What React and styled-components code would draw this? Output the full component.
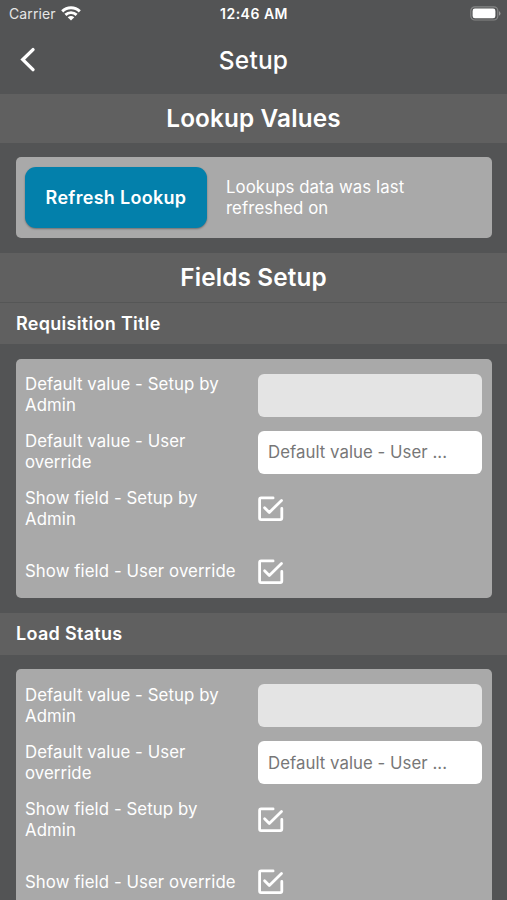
import React from "react";
import styled, { createGlobalStyle } from "styled-components";

const GlobalStyle = createGlobalStyle`
  * { box-sizing: border-box; }
  html, body { margin: 0; height: 100%; overflow: hidden; }
  body { background: #535455; color: #fff; font-family: Inter, "Liberation Sans", sans-serif; }
`;

const Screen = styled.main`
  display: flex;
  flex-direction: column;
  height: 900px;
  overflow: hidden;
  background: #535455;
`;

const StatusBar = styled.div`
  display: grid;
  grid-template-columns: 1fr auto 1fr;
  align-items: center;
  flex: none;
  height: 27px;
  padding: 0 6px 0 9px;
  font-size: 14px;
  line-height: 17px;
`;

const Carrier = styled.div`
  display: flex;
  align-items: center;
  gap: 5px;
  color: #e6e6e6;
  letter-spacing: 0.12px;
`;

const Clock = styled.div`
  margin-left: -2px;
  font-weight: 600;
  letter-spacing: 0.5px;
`;

const BatteryIcon = styled.svg`
  justify-self: end;
`;

const NavBar = styled.header`
  display: grid;
  grid-template-columns: 56px 1fr 56px;
  align-items: center;
  flex: none;
  height: 67px;
  padding-bottom: 2px;
`;

const BackButton = styled.button`
  display: flex;
  justify-content: center;
  padding: 0;
  border: 0;
  background: none;
`;

const PageTitle = styled.h1`
  margin: 0;
  text-align: center;
  font-size: 24.5px;
  font-weight: 500;
  letter-spacing: 0.2px;
`;

const SectionTitle = styled.h2`
  display: flex;
  align-items: center;
  justify-content: center;
  flex: none;
  height: 49px;
  margin: 0;
  padding-bottom: 1.5px;
  background: #606060;
  font-size: 24.3px;
  font-weight: 600;
  letter-spacing: 0.15px;
`;

const FieldTitle = styled.h3`
  display: flex;
  align-items: center;
  flex: none;
  height: 42px;
  margin: 0;
  padding-left: 16px;
  background: #606060;
  font-size: 18px;
  font-weight: 600;
  letter-spacing: 0.3px;
  box-shadow: ${(p) => (p.$divided ? "inset 0 1px #555656" : "none")};
`;

const Card = styled.section`
  flex: none;
  margin: 14px 15px 15px 15.5px;
  border-radius: 5px;
  background: #a9a9a9;
`;

const RefreshCard = styled(Card)`
  display: flex;
  align-items: center;
  gap: 19px;
  height: 81px;
  padding: 0 10px 0 9.5px;
`;

const RefreshButton = styled.button`
  flex: none;
  width: 182px;
  height: 61px;
  padding: 0;
  border: 0;
  border-radius: 11px;
  background: #0380ab;
  color: #fff;
  box-shadow: 0 1px 2px #00000059;
  font: 600 18px Inter, sans-serif;
  letter-spacing: 0.3px;
`;

const Label = styled.div`
  font-size: 16.8px;
  line-height: 21px;
  letter-spacing: 0.08px;
`;

const RefreshNote = styled(Label)`
  width: 220px;
`;

const FieldCard = styled(Card)`
  display: grid;
  grid-template-columns: 219px 224px;
  grid-template-rows: 43px 43px 43px 43px;
  column-gap: 14px;
  row-gap: 14.2px;
  align-items: center;
  height: 239px;
  margin-top: 14.6px;
  margin-bottom: 15px;
  padding: 15px 9.5px 0;
`;

const ValueInput = styled.input`
  width: 224px;
  height: 43px;
  padding: 0 30px 0 10px;
  border: 0;
  border-radius: 6px;
  outline: 0;
  background: ${(p) => (p.disabled ? "#e4e4e4" : "#fff")};
  font: 16.8px Inter, sans-serif;
  letter-spacing: 0.04px;
  &::placeholder { color: #777; opacity: 1; }
`;

const LastLabel = styled(Label)`
  padding-top: 10px;
`;

const LastCheck = styled.div`
  padding-top: 10px;
`;

const CheckSvg = styled.svg`
  display: block;
`;

function CheckIcon() {
  return (
    <CheckSvg width="26" height="26" viewBox="0 0 26 26" fill="none" stroke="#fff" strokeWidth="2.8" strokeLinecap="round" strokeLinejoin="round">
      <path d="M15.1 1.9H3.1Q1.6 1.9 1.6 3.4V22.1Q1.6 23.6 3.1 23.6H22.3Q23.8 23.6 23.8 22.1V12.4" />
      <path d="M6.6 11.7L11.3 16.4L23.5 4.4" />
    </CheckSvg>
  );
}

function FieldSettings() {
  return (
    <FieldCard>
      <Label>Default value - Setup by Admin</Label>
      <ValueInput disabled aria-label="Default value - Setup by Admin" />
      <Label>Default value - User<br />override</Label>
      <ValueInput placeholder="Default value - User ..." />
      <Label>Show field - Setup by Admin</Label>
      <CheckIcon />
      <LastLabel>Show field - User override</LastLabel>
      <LastCheck><CheckIcon /></LastCheck>
    </FieldCard>
  );
}

export default function App() {
  return (
    <Screen>
      <GlobalStyle />
      <StatusBar>
        <Carrier>
          <span>Carrier</span>
          <svg width="20" height="16" viewBox="0 0 20 16" fill="none" stroke="#fff" strokeWidth="2.9">
            <path d="M1.2 5.4C6.2 .6 13.8 .6 18.8 5.4" />
            <path d="M4.4 8.9C7.6 5.9 12.4 5.9 15.6 8.9" />
            <path d="M6.7 11.2Q10 8.6 13.3 11.2L10 14.6Z" fill="#fff" stroke="none" />
          </svg>
        </Carrier>
        <Clock>12:46 AM</Clock>
        <BatteryIcon width="31" height="15" viewBox="0 0 31 15">
          <rect x=".8" y=".8" width="27" height="13.2" rx="4" fill="none" stroke="#858686" strokeWidth="1.2" />
          <rect x="2.6" y="2.6" width="22.8" height="9.6" rx="2.3" fill="#fff" />
          <path d="M29 5Q32 7.4 29 9.8Z" fill="#999" />
        </BatteryIcon>
      </StatusBar>
      <NavBar>
        <BackButton aria-label="Back">
          <svg width="16" height="26" viewBox="0 0 16 26" fill="none" stroke="#fff" strokeWidth="3.4" strokeLinecap="round">
            <path d="M13 2.6L2.8 12.6L13 22.6" />
          </svg>
        </BackButton>
        <PageTitle>Setup</PageTitle>
      </NavBar>
      <SectionTitle>Lookup Values</SectionTitle>
      <RefreshCard>
        <RefreshButton>Refresh Lookup</RefreshButton>
        <RefreshNote>Lookups data was last refreshed on</RefreshNote>
      </RefreshCard>
      <SectionTitle>Fields Setup</SectionTitle>
      <FieldTitle $divided>Requisition Title</FieldTitle>
      <FieldSettings />
      <FieldTitle>Load Status</FieldTitle>
      <FieldSettings />
    </Screen>
  );
}
